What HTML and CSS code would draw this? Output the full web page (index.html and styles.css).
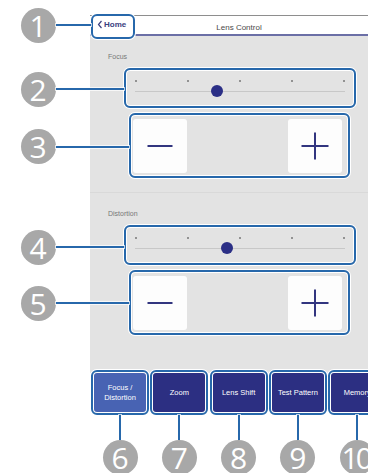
FILE: index.html
```html
<!DOCTYPE html>
<html>
    <head>
        <link rel="stylesheet" href="styles.css">
    </head>
    <body>
        <div class="screen">
            <div class="panel">
                <div class="header">
                    <a class="home callout">
                        <svg width="6" height="9" viewBox="0 0 6 9"><path d="M4.5 1L1.5 4.5L4.5 8" fill="none" stroke="#3b4080" stroke-width="1.2"/></svg>
                        Home
                    </a>
                    <span class="title">Lens Control</span>
                </div>

                <div class="content">
                    <div class="section divided">
                        <div class="label">Focus</div>
                        <div class="slider callout">
                            <div class="dots"><span></span><span></span><span></span><span></span><span></span></div>
                            <div class="track"><span class="knob" style="left: 39%"></span></div>
                        </div>
                        <div class="steppers callout">
                            <button class="step">
                                <svg width="28" height="28" viewBox="0 0 28 28"><path d="M1.5 14H26.5" stroke="#32357f" stroke-width="2"/></svg>
                            </button>
                            <button class="step">
                                <svg width="28" height="28" viewBox="0 0 28 28"><path d="M0.5 14H27.5M14 0.5V27.5" stroke="#32357f" stroke-width="2"/></svg>
                            </button>
                        </div>
                    </div>

                    <div class="section">
                        <div class="label">Distortion</div>
                        <div class="slider callout">
                            <div class="dots"><span></span><span></span><span></span><span></span><span></span></div>
                            <div class="track"><span class="knob" style="left: 44%"></span></div>
                        </div>
                        <div class="steppers callout">
                            <button class="step">
                                <svg width="28" height="28" viewBox="0 0 28 28"><path d="M1.5 14H26.5" stroke="#32357f" stroke-width="2"/></svg>
                            </button>
                            <button class="step">
                                <svg width="28" height="28" viewBox="0 0 28 28"><path d="M0.5 14H27.5M14 0.5V27.5" stroke="#32357f" stroke-width="2"/></svg>
                            </button>
                        </div>
                    </div>
                </div>

                <div class="tabs">
                    <div class="tab-wrap callout"><button class="tab active">Focus /<br>Distortion</button></div>
                    <div class="tab-wrap callout"><button class="tab">Zoom</button></div>
                    <div class="tab-wrap callout"><button class="tab">Lens Shift</button></div>
                    <div class="tab-wrap callout"><button class="tab">Test Pattern</button></div>
                    <div class="tab-wrap callout"><button class="tab">Memory</button></div>
                </div>
            </div>

            <!-- numbered markers -->
            <div class="side m1"><span class="num">1</span><span class="wire"></span></div>
            <div class="side m2"><span class="num">2</span><span class="wire"></span></div>
            <div class="side m3"><span class="num">3</span><span class="wire"></span></div>
            <div class="side m4"><span class="num">4</span><span class="wire"></span></div>
            <div class="side m5"><span class="num">5</span><span class="wire"></span></div>

            <div class="down m6"><span class="wire"></span><span class="num">6</span></div>
            <div class="down m7"><span class="wire"></span><span class="num">7</span></div>
            <div class="down m8"><span class="wire"></span><span class="num">8</span></div>
            <div class="down m9"><span class="wire"></span><span class="num">9</span></div>
            <div class="down m10"><span class="wire"></span><span class="num ten">10</span></div>
        </div>
    </body>
</html>
```

FILE: styles.css
```css
body {
    margin: 0;
    background-color: #fff;
    font-family: "Liberation Sans", Arial, sans-serif;
}

.screen {
    position: relative;
    width: 368px;
    height: 473px;
    padding-top: 15px;
    box-sizing: border-box;
    overflow: hidden;
}

.panel {
    margin-left: 90px;
    width: 298px;
}

.callout {
    border: 2px solid #2768ab;
    border-radius: 6px;
    box-shadow: inset 0 0 0 1px #fff, 0 0 0 1px #fff;
    box-sizing: border-box;
}

/* header */

.header {
    position: relative;
    height: 18px;
    border-top: 1px solid #8e8e8e;
    border-bottom: 2px solid #6b6fa6;
    background-color: #fff;
    text-align: center;
}

.title {
    font-size: 8px;
    line-height: 18px;
    color: #4a4a4a;
}

.home {
    position: absolute;
    left: 1px;
    top: -2px;
    width: 44px;
    height: 25px;
    padding: 0 0 0 4px;
    display: flex;
    align-items: flex-start;
    gap: 1px;
    background-color: #fff;
    font-size: 8px;
    font-weight: bold;
    line-height: 18px;
    color: #3b4080;
}

.home svg {
    margin-top: 4px;
}

/* lens sections */

.content {
    height: 337px;
    background-color: #e3e3e3;
}

.section {
    padding-top: 16px;
    height: 156px;
    box-sizing: border-box;
}

.section.divided {
    height: 157px;
    border-bottom: 1px solid #d9d9d9;
}

.label {
    margin-left: 18px;
    font-size: 7px;
    line-height: 10px;
    color: #777;
}

.slider {
    margin: 6px 0 0 34px;
    width: 232px;
    height: 40px;
    padding: 10px 9px 0;
}

.dots {
    display: flex;
    justify-content: space-between;
    height: 2px;
}

.dots span {
    width: 2px;
    height: 2px;
    border-radius: 50%;
    background-color: #777;
}

.track {
    position: relative;
    margin-top: 9px;
    height: 1px;
    background-color: #c8c8c8;
}

.knob {
    position: absolute;
    top: -6px;
    width: 12px;
    height: 12px;
    margin-left: -6px;
    border-radius: 50%;
    background-color: #2b2f86;
}

.steppers {
    margin: 5px 0 0 39px;
    width: 221px;
    height: 65px;
    padding: 4px 6px 3px 2px;
    display: flex;
    justify-content: space-between;
}

.step {
    width: 54px;
    height: 54px;
    padding: 0;
    border: none;
    border-radius: 3px;
    background-color: #fdfdfd;
    display: flex;
    align-items: center;
    justify-content: center;
}

/* bottom tabs */

.tabs {
    display: flex;
    gap: 1.3px;
    margin: -3px 0 0 1px;
}

.tab-wrap {
    width: 58px;
    height: 45px;
    padding: 1px;
    flex-shrink: 0;
    background-color: #fff;
}

.tab {
    width: 52px;
    height: 39px;
    padding: 0;
    border: none;
    border-radius: 3px;
    background-color: #2c2f82;
    color: #fff;
    font-family: "Liberation Sans", Arial, sans-serif;
    font-size: 7.5px;
    line-height: 10px;
    white-space: nowrap;
}

.tab.active {
    background-color: #4863b3;
}

/* markers */

.num {
    width: 35px;
    height: 35px;
    flex-shrink: 0;
    border-radius: 50%;
    background-color: #a8a8a8;
    color: #fff;
    font-family: "Open Sans", "DejaVu Sans", sans-serif;
    font-size: 30px;
    line-height: 35px;
    text-align: center;
}

.num.ten {
    letter-spacing: -3px;
    text-indent: -3px;
}

.wire {
    background-color: #2768ab;
    box-shadow: 0 0 0 1px rgba(255, 255, 255, 0.7);
}

.side {
    position: absolute;
    left: 20.5px;
    display: flex;
    align-items: center;
}

.side .wire {
    height: 2px;
}

.m1 { top: 7.5px; }
.m1 .wire { width: 35.5px; }
.m2 { top: 71.5px; }
.m2 .wire { width: 68.5px; }
.m3 { top: 129px; }
.m3 .wire { width: 73.5px; }
.m4 { top: 229.5px; }
.m4 .wire { width: 68.5px; }
.m5 { top: 285.5px; }
.m5 .wire { width: 73.5px; }

.down {
    position: absolute;
    top: 415px;
    width: 35px;
    display: flex;
    flex-direction: column;
    align-items: center;
}

.down .wire {
    width: 2px;
    height: 25px;
}

.m6 { left: 102.5px; }
.m7 { left: 161.8px; }
.m8 { left: 221.1px; }
.m9 { left: 280.4px; }
.m10 { left: 339.7px; }
```
